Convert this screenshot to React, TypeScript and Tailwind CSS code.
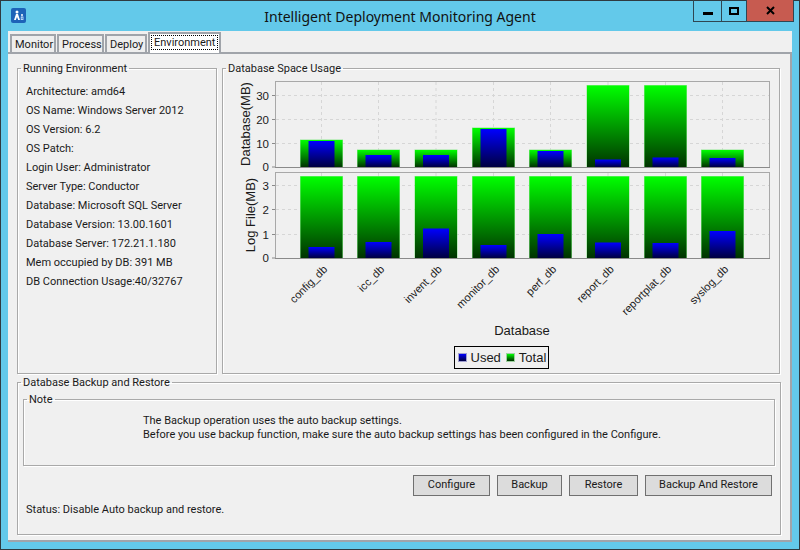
const uiFont = "font-['Roboto',sans-serif]";

const envRows = [
  "Architecture: amd64",
  "OS Name: Windows Server 2012",
  "OS Version: 6.2",
  "OS Patch:",
  "Login User: Administrator",
  "Server Type: Conductor",
  "Database: Microsoft SQL Server",
  "Database Version: 13.00.1601",
  "Database Server: 172.21.1.180",
  "Mem occupied by DB: 391 MB",
  "DB Connection Usage:40/32767",
];

const bars = [
  { name: "config_db", x: 300, dbTotal: 139.5, dbUsed: 141, logUsed: 247 },
  { name: "icc_db", x: 357, dbTotal: 149.5, dbUsed: 155, logUsed: 242 },
  { name: "invent_db", x: 414.5, dbTotal: 149.5, dbUsed: 155, logUsed: 228.5 },
  { name: "monitor_db", x: 472, dbTotal: 127.5, dbUsed: 129, logUsed: 245 },
  { name: "perf_db", x: 529, dbTotal: 149.5, dbUsed: 151, logUsed: 234 },
  { name: "report_db", x: 586.5, dbTotal: 85, dbUsed: 159.5, logUsed: 242.5 },
  { name: "reportplat_db", x: 644, dbTotal: 85, dbUsed: 157.5, logUsed: 243 },
  { name: "syslog_db", x: 701, dbTotal: 149.5, dbUsed: 158, logUsed: 231 },
];

const dbTicks = [
  { label: "0", y: 167 },
  { label: "10", y: 143.5 },
  { label: "20", y: 119.5 },
  { label: "30", y: 95.5 },
];
const logTicks = [
  { label: "0", y: 258 },
  { label: "1", y: 234.5 },
  { label: "2", y: 209.5 },
  { label: "3", y: 185.5 },
];

function Group({ title, className, children }: { title: string; className: string; children?: React.ReactNode }) {
  return (
    <fieldset className={`border border-[#a9a9a9] shadow-[1px_1px_0_#fff,inset_1px_1px_0_#fff] ${className}`}>
      <legend className="ml-[3px] px-[2px] h-[14px] leading-[16px] text-[11px] text-[#1a1a1a]">{title}</legend>
      {children}
    </fieldset>
  );
}

function Plot({ top, bottom, ticks, bar }: { top: number; bottom: number; ticks: { label: string; y: number }[]; bar: "db" | "log" }) {
  return (
    <g>
      <rect x="275.5" y={top + 0.5} width="494" height={bottom - top} fill="#f0f0f0" stroke="#a8a8a8" />
      {ticks.slice(1).map((t) => (
        <line key={t.label} x1="276" x2="769" y1={t.y} y2={t.y} stroke="#d6d6d6" strokeDasharray="3 3" />
      ))}
      {bars.map((b) => (
        <line key={b.name} x1={b.x + 21.5} x2={b.x + 21.5} y1={top + 1} y2={bottom} stroke="#d6d6d6" strokeDasharray="3 3" />
      ))}
      {ticks.map((t) => (
        <g key={t.label}>
          <line x1="272" x2="275" y1={t.y} y2={t.y} stroke="#8a8a8a" />
          <text x="269" y={t.y + 4} textAnchor="end" fontSize="11.5" fill="#1a1a1a">
            {t.label}
          </text>
        </g>
      ))}
      {bars.map((b) => {
        const totalTop = bar === "db" ? b.dbTotal : 176;
        const usedTop = bar === "db" ? b.dbUsed : b.logUsed;
        return (
          <g key={b.name}>
            <rect x={b.x} y={totalTop} width="43" height={bottom - totalTop} fill="#8fe88f" />
            <rect x={b.x + 0.5} y={totalTop + 0.5} width="42" height={bottom - totalTop - 0.5} fill={`url(#green-${bar}-${b.name})`} />
            <rect x={b.x + 8.5} y={usedTop} width="26" height={bottom - usedTop} fill={`url(#blue-${bar}-${b.name})`} />
            <defs>
              <linearGradient id={`green-${bar}-${b.name}`} x1="0" y1="0" x2="0" y2="1">
                <stop offset="0" stopColor="#00ff00" />
                <stop offset="1" stopColor="#003300" />
              </linearGradient>
              <linearGradient id={`blue-${bar}-${b.name}`} x1="0" y1="0" x2="0" y2="1">
                <stop offset="0" stopColor="#0000ff" />
                <stop offset="1" stopColor="#000040" />
              </linearGradient>
            </defs>
          </g>
        );
      })}
      <line x1="275" x2="770" y1={bottom + 0.5} y2={bottom + 0.5} stroke="#8a8a8a" />
    </g>
  );
}

function Chart() {
  return (
    <svg viewBox="223 75 556 265" width="556" height="265" className="block font-['Liberation_Sans',sans-serif]">
      <Plot top={81} bottom={167} ticks={dbTicks} bar="db" />
      <Plot top={172} bottom={258} ticks={logTicks} bar="log" />
      <text transform="translate(250 124) rotate(-90)" textAnchor="middle" fontSize="13" fill="#1a1a1a">
        Database(MB)
      </text>
      <text transform="translate(255 215) rotate(-90)" textAnchor="middle" fontSize="13" fill="#1a1a1a">
        Log File(MB)
      </text>
      {bars.map((b) => (
        <text key={b.name} transform={`translate(${b.x + 28} 270) rotate(-45)`} textAnchor="end" fontSize="11" fill="#1a1a1a">
          {b.name}
        </text>
      ))}
      <text x="522" y="335" textAnchor="middle" fontSize="13" fill="#1a1a1a">
        Database
      </text>
    </svg>
  );
}

function Legend() {
  return (
    <div className="w-[95px] h-[23px] mx-auto mt-[6px] border border-black flex items-center pl-[3px] gap-[4px] text-[13px] text-[#1a1a1a] font-['Liberation_Sans',sans-serif]">
      <span className="w-[9px] h-[9px] bg-gradient-to-b from-[#0000ff] to-[#000040] border border-[#a0a0d0]" />
      <span>Used</span>
      <span className="w-[9px] h-[9px] ml-[1px] bg-gradient-to-b from-[#00ff00] to-[#003300] border border-[#a0d0a0]" />
      <span>Total</span>
    </div>
  );
}

function AppIcon() {
  return (
    <svg width="15" height="15" viewBox="0 0 15 15" className="ml-[3px] -mt-[1px]">
      <rect width="15" height="15" rx="2" fill="#1d63b8" />
      <circle cx="6" cy="4" r="1.5" fill="#fff" />
      <path d="M3 12 L5 6 H7 L9 12 H7.2 L6 9 L4.8 12 Z" fill="#fff" />
      <circle cx="11" cy="7" r="1" fill="#fff" />
      <path d="M9.8 8.5 H12.4 V12 H9.8 Z M10.6 9.4 V11.2 H11.6 V9.4 Z" fill="#cfe6ff" />
    </svg>
  );
}

function WindowButtons() {
  return (
    <div className="justify-self-end self-start -mt-[1px] mr-[-2px] h-[22px] flex border border-t-0 border-[#2f4652]">
      <div className="w-[28px] flex items-center justify-center pt-[5px] border-r border-[#2f4652]">
        <span className="w-[10px] h-[3px] bg-black" />
      </div>
      <div className="w-[25px] flex items-center justify-center border-r border-[#2f4652]">
        <span className="w-[10px] h-[8px] border-2 border-black" />
      </div>
      <div className="w-[46px] flex items-center justify-center bg-[#c75b50]">
        <svg width="9" height="9" viewBox="0 0 9 9">
          <path d="M1 1 L8 8 M8 1 L1 8" stroke="#000" strokeWidth="2" />
        </svg>
      </div>
    </div>
  );
}

function Tabs() {
  const tab = "h-[18px] pl-[3px] border-2 border-b-0 border-[#a0a4aa] bg-[#eeeeee] leading-[17px] whitespace-nowrap";
  return (
    <div className="h-[21px] pl-[2px] flex items-end gap-[1px] text-[11px] text-[#1a1a1a]">
      <div className={`${tab} w-[46px]`}>Monitor</div>
      <div className={`${tab} w-[47px]`}>Process</div>
      <div className={`${tab} w-[42px]`}>Deploy</div>
      <div className="relative top-[1px] w-[73px] h-[21px] p-[1px] border-2 border-b-0 border-[#a0a4aa] bg-white">
        <div className="h-[15px] leading-[14px] pl-[2px] border border-dotted border-black whitespace-nowrap">Environment</div>
      </div>
    </div>
  );
}

export default function App() {
  return (
    <div className={`w-[800px] h-[550px] flex flex-col border border-[#2f3a40] bg-[#63c9ea] px-[7px] pb-[7px] ${uiFont}`}>
      <div className="h-[30px] shrink-0 grid grid-cols-[1fr_auto_1fr] items-center">
        <AppIcon />
        <div className="text-[14px] text-[#111] font-['Noto_Sans',sans-serif]">Intelligent Deployment Monitoring Agent</div>
        <WindowButtons />
      </div>
      <div className="flex-1 min-h-0 flex flex-col bg-[#f0f0f0]">
        <Tabs />
        <div className="flex-1 min-h-0 flex flex-col gap-[1px] border-t-2 border-r-2 border-b-2 border-[#a0a4aa] pl-[9px] pr-[9px] pt-[7px]">
          <div className="flex gap-[5px]">
            <Group title="Running Environment" className="w-[200px] h-[313px]">
              <div className="pl-[8px] pt-[7px]">
                {envRows.map((r) => (
                  <div key={r} className="h-[19px] leading-[19px] text-[11px] text-[#1a1a1a] whitespace-nowrap">
                    {r}
                  </div>
                ))}
              </div>
            </Group>
            <Group title="Database Space Usage" className="w-[558px] h-[313px]">
              <Chart />
              <Legend />
            </Group>
          </div>
          <Group title="Database Backup and Restore" className="w-[764px] h-[160px]">
            <div className="px-[5px] pt-[3px]">
              <Group title="Note" className="h-[74px]">
                <div className="pl-[119px] pt-[8px] text-[11px] leading-[14px] text-[#1a1a1a]">
                  <div>The Backup operation uses the auto backup settings.</div>
                  <div>Before you use backup function, make sure the auto backup settings has been configured in the Configure.</div>
                </div>
              </Group>
              <div className="mt-[9px] flex justify-end gap-[7px] pr-[3px] text-[11px] text-[#1a1a1a]">
                <button className="w-[77px] h-[21px] border border-[#707070] bg-[#dcdcdc]">Configure</button>
                <button className="w-[65px] h-[21px] border border-[#707070] bg-[#dcdcdc]">Backup</button>
                <button className="w-[69px] h-[21px] border border-[#707070] bg-[#dcdcdc]">Restore</button>
                <button className="w-[127px] h-[21px] border border-[#707070] bg-[#dcdcdc]">Backup And Restore</button>
              </div>
              <div className="mt-[7px] pl-[3px] text-[11px] leading-[14px] text-[#1a1a1a]">Status: Disable Auto backup and restore.</div>
            </div>
          </Group>
        </div>
      </div>
    </div>
  );
}
